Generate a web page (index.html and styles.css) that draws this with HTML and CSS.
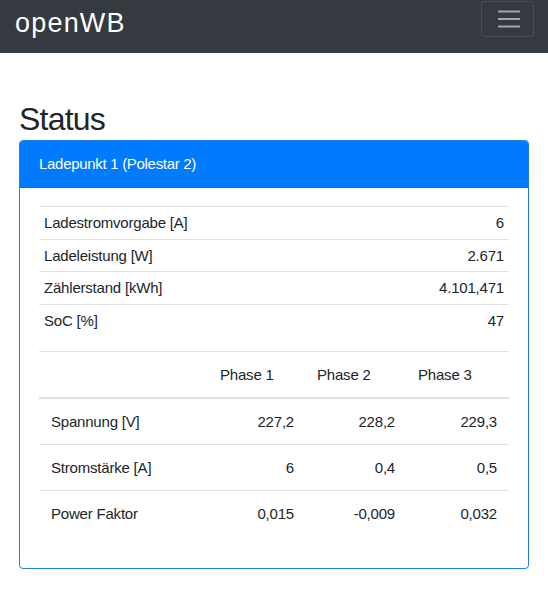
FILE: index.html
```html
<!DOCTYPE html>
<html lang="de">
<head>
<meta charset="utf-8">
<title>openWB Status</title>
<link rel="stylesheet" href="styles.css">
</head>
<body>
<nav class="navbar">
  <span class="brand">openWB</span>
  <button class="toggler" type="button" aria-label="Menü">
    <svg width="24" height="20" viewBox="0 0 24 20">
      <path d="M1 2.5h22M1 10h22M1 17.5h22" stroke="rgba(255,255,255,0.55)" stroke-width="2" fill="none"/>
    </svg>
  </button>
</nav>
<main class="container">
  <h1 class="title">Status</h1>
  <section class="card">
    <header class="card-header">Ladepunkt 1 (Polestar 2)</header>
    <div class="card-body">
      <table class="table-sm">
        <tbody>
          <tr><td>Ladestromvorgabe [A]</td><td class="num">6</td></tr>
          <tr><td>Ladeleistung [W]</td><td class="num">2.671</td></tr>
          <tr><td>Zählerstand [kWh]</td><td class="num">4.101,471</td></tr>
          <tr><td>SoC [%]</td><td class="num">47</td></tr>
        </tbody>
      </table>
      <table class="table-phase">
        <colgroup>
          <col class="c-label"><col class="c-p1"><col class="c-p2"><col class="c-p3">
        </colgroup>
        <thead>
          <tr><th></th><th>Phase 1</th><th>Phase 2</th><th>Phase 3</th></tr>
        </thead>
        <tbody>
          <tr><td>Spannung [V]</td><td class="num">227,2</td><td class="num">228,2</td><td class="num">229,3</td></tr>
          <tr><td>Stromstärke [A]</td><td class="num">6</td><td class="num">0,4</td><td class="num">0,5</td></tr>
          <tr><td>Power Faktor</td><td class="num">0,015</td><td class="num">-0,009</td><td class="num">0,032</td></tr>
        </tbody>
      </table>
    </div>
  </section>
</main>
</body>
</html>
```
FILE: styles.css
```css
* { box-sizing: border-box; }

html, body {
  margin: 0;
  padding: 0;
  background: #ffffff;
}

body {
  font-family: "Liberation Sans", Arial, Helvetica, sans-serif;
  font-size: 15px;
  color: #212529;
  letter-spacing: -0.2px;
}

.navbar {
  height: 53px;
  background: #343a40;
  display: flex;
  justify-content: space-between;
  align-items: flex-start;
  padding: 0 14px 0 15px;
}

.brand {
  color: #ffffff;
  font-size: 27px;
  line-height: 27px;
  margin-top: 10px;
  letter-spacing: 1.2px;
}

.toggler {
  margin-top: 1px;
  width: 53px;
  height: 36px;
  background: transparent;
  border: 1px solid rgba(255, 255, 255, 0.1);
  border-radius: 4px;
  padding: 0;
  display: flex;
  align-items: center;
  justify-content: center;
}

.toggler svg { display: block; margin-left: 2px; }

.container {
  padding: 0 19px;
}

.title {
  font-size: 32px;
  font-weight: 400;
  line-height: 38px;
  letter-spacing: -0.8px;
  margin: 47px 0 2px 0;
  color: #212529;
}

.card {
  border: 1px solid #1f7fe6;
  border-radius: 4px;
  overflow: hidden;
}

.card-header {
  background: #007bff;
  color: #ffffff;
  padding: 12px 19px;
  line-height: 22px;
  letter-spacing: -0.3px;
  border-bottom: 1px solid #0a6fdb;
}

.card-body {
  padding: 18px 19px 16px 19px;
}

table {
  width: 100%;
  border-collapse: collapse;
}

.table-sm {
  margin-bottom: 15px;
}

.table-sm td {
  padding: 5px;
  line-height: 21.5px;
  border-top: 1px solid #dee2e6;
}

.num { text-align: right; }

.table-phase {
  margin-bottom: 16px;
  table-layout: fixed;
}

.c-label { width: 170px; }
.c-p1 { width: 97px; }
.c-p2 { width: 101px; }
.c-p3 { width: 102px; }

.table-phase th,
.table-phase td {
  padding: 11.5px 12px 11.5px 12px;
  line-height: 22px;
  border-top: 1px solid #dee2e6;
}

.table-phase th {
  text-align: left;
  font-weight: 400;
  padding-left: 11px;
  border-bottom: 2px solid #dee2e6;
}
```
